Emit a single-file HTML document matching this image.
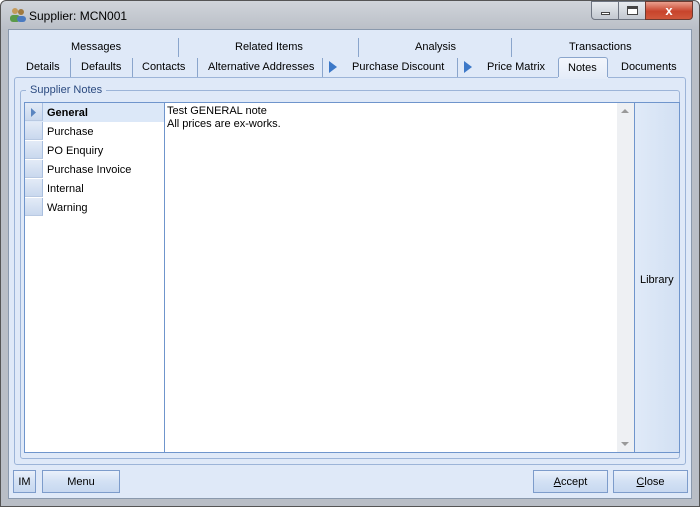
<!DOCTYPE html>
<html><head><style>
*{margin:0;padding:0;box-sizing:border-box}
body{width:700px;height:507px;overflow:hidden;font-family:"Liberation Sans",sans-serif;font-size:11px;color:#000;background:#fff}
.win{position:absolute;left:0;top:0;width:700px;height:507px;background:linear-gradient(#d0d4da,#b9bec6 30px,#b9bec6);border:1px solid #555;border-radius:6px 6px 0 0}
.title{position:absolute;left:28px;top:8px;font-size:12px;color:#000}
.client{position:absolute;left:8px;top:29px;width:684px;height:470px;background:#dfe9f8;border:1px solid #8a99ad}
.a{position:absolute}
.t{position:absolute;white-space:nowrap;font-size:11px}
.sep{position:absolute;width:1px;background:#8aa5cc}
.btn{position:absolute;border:1px solid #7d9ccb;background:linear-gradient(#eaf1fb,#d3e1f4 50%,#c7d8f0);text-align:center;line-height:22px;font-size:11px}
.row{position:absolute;left:25px;width:139px;height:19px}
.row .h{position:absolute;left:0;top:0;width:18px;height:18px;background:linear-gradient(#e3ebf7,#c9d8ee);border-bottom:1px solid #b8c9e2;border-right:1px solid #a9bfdf}
.row span{position:absolute;left:22px;top:4px}
</style></head><body>
<div class="win">
 <svg class="a" style="left:8px;top:6px" width="18" height="16"><circle cx="6" cy="4" r="3" fill="#c49a5a"/><circle cx="12" cy="5" r="3" fill="#a07a40"/><rect x="1" y="8" width="10" height="7" rx="3" fill="#5a9a4a"/><rect x="8" y="9" width="9" height="6" rx="3" fill="#4a7ac0"/></svg>
 <div class="title">Supplier: MCN001</div>
 <div class="a" style="left:590px;top:0;width:28px;height:19px;border:1px solid #6d7480;border-radius:0 0 0 4px;background:linear-gradient(#e8ebef,#c2c8d0)"><div class="a" style="left:9px;top:10px;width:9px;height:3px;background:#fff;border:1px solid #444"></div></div>
 <div class="a" style="left:617px;top:0;width:28px;height:19px;border:1px solid #6d7480;background:linear-gradient(#e8ebef,#c2c8d0)"><div class="a" style="left:8px;top:4px;width:11px;height:9px;border:1px solid #444;border-top-width:3px;background:#fff"></div></div>
 <div class="a" style="left:644px;top:0;width:48px;height:19px;border:1px solid #6d3a30;border-radius:0 0 4px 0;background:linear-gradient(#e9a08e,#c8442c 55%,#d0583c);color:#fff;font-weight:bold;font-size:13px;text-align:center;line-height:17px">x</div>
</div>
<div class="client"></div>
<div class="t" style="left:71px;top:41px">Messages</div>
<div class="sep" style="left:178px;top:38px;height:19px"></div>
<div class="t" style="left:235px;top:41px">Related Items</div>
<div class="sep" style="left:358px;top:38px;height:19px"></div>
<div class="t" style="left:415px;top:41px">Analysis</div>
<div class="sep" style="left:511px;top:38px;height:19px"></div>
<div class="t" style="left:569px;top:41px">Transactions</div>
<div class="t" style="left:26px;top:61px">Details</div>
<div class="sep" style="left:70px;top:58px;height:19px"></div>
<div class="t" style="left:81px;top:61px">Defaults</div>
<div class="sep" style="left:132px;top:58px;height:19px"></div>
<div class="t" style="left:142px;top:61px">Contacts</div>
<div class="sep" style="left:197px;top:58px;height:19px"></div>
<div class="t" style="left:208px;top:61px">Alternative Addresses</div>
<div class="sep" style="left:322px;top:58px;height:19px"></div>
<svg class="a" style="left:328px;top:60px" width="10" height="14"><path d="M1 1L9 7L1 13Z" fill="#3c78c8"/></svg>
<div class="t" style="left:352px;top:61px">Purchase Discount</div>
<div class="sep" style="left:457px;top:58px;height:19px"></div>
<svg class="a" style="left:463px;top:60px" width="10" height="14"><path d="M1 1L9 7L1 13Z" fill="#3c78c8"/></svg>
<div class="t" style="left:487px;top:61px">Price Matrix</div>
<div class="a" style="left:558px;top:57px;width:50px;height:22px;background:linear-gradient(#f3f6fc,#e4ecf8);border:1px solid #8aa5cc;border-bottom:none;border-radius:3px 3px 0 0"></div>
<div class="t" style="left:568px;top:62px">Notes</div>
<div class="t" style="left:621px;top:61px">Documents</div>
<div class="a" style="left:14px;top:77px;width:672px;height:388px;border:1px solid #9cb4d8;border-radius:3px;background:#dfe9f8"></div>
<div class="a" style="left:558px;top:77px;width:50px;height:2px;background:#e4ecf8"></div>
<div class="a" style="left:20px;top:90px;width:660px;height:369px;border:1px solid #9cb4d8;border-radius:3px"></div>
<div class="t" style="left:26px;top:84px;background:#dfe9f8;padding:0 4px;color:#2b4a80">Supplier Notes</div>
<div class="a" style="left:24px;top:102px;width:141px;height:351px;background:#fff;border:1px solid #6f95cc"></div>
<div class="a" style="left:25px;top:103px;width:139px;height:19px;background:#dce8f8"></div>
<div class="row" style="top:103px"><div class="h"></div><svg class="a" style="left:6px;top:5px" width="6" height="9"><path d="M0 0L5 4.5L0 9Z" fill="#5a85c0"/></svg><span style="font-weight:bold">General</span></div>
<div class="row" style="top:122px"><div class="h"></div><span>Purchase</span></div>
<div class="row" style="top:141px"><div class="h"></div><span>PO Enquiry</span></div>
<div class="row" style="top:160px"><div class="h"></div><span>Purchase Invoice</span></div>
<div class="row" style="top:179px"><div class="h"></div><span>Internal</span></div>
<div class="row" style="top:198px"><div class="h"></div><span>Warning</span></div>
<div class="a" style="left:164px;top:102px;width:471px;height:351px;background:#fff;border:1px solid #6f95cc"></div>
<div class="a" style="left:617px;top:103px;width:17px;height:349px;background:#eef0f3"></div>
<svg class="a" style="left:621px;top:108px" width="8" height="6"><path d="M0 5L4 1L8 5Z" fill="#999"/></svg>
<svg class="a" style="left:621px;top:441px" width="8" height="6"><path d="M0 1L4 5L8 1Z" fill="#999"/></svg>
<div class="t" style="left:167px;top:105px;line-height:13px">Test GENERAL note<br>All prices are ex-works.</div>
<div class="a" style="left:634px;top:102px;width:46px;height:351px;border:1px solid #6f95cc;background:linear-gradient(90deg,#e0eaf8,#d2e0f3)"></div>
<div class="t" style="left:640px;top:274px">Library</div>
<div class="btn" style="left:13px;top:470px;width:23px;height:23px">IM</div>
<div class="btn" style="left:42px;top:470px;width:78px;height:23px">Menu</div>
<div class="btn" style="left:533px;top:470px;width:75px;height:23px"><u>A</u>ccept</div>
<div class="btn" style="left:613px;top:470px;width:75px;height:23px"><u>C</u>lose</div>
</body></html>
